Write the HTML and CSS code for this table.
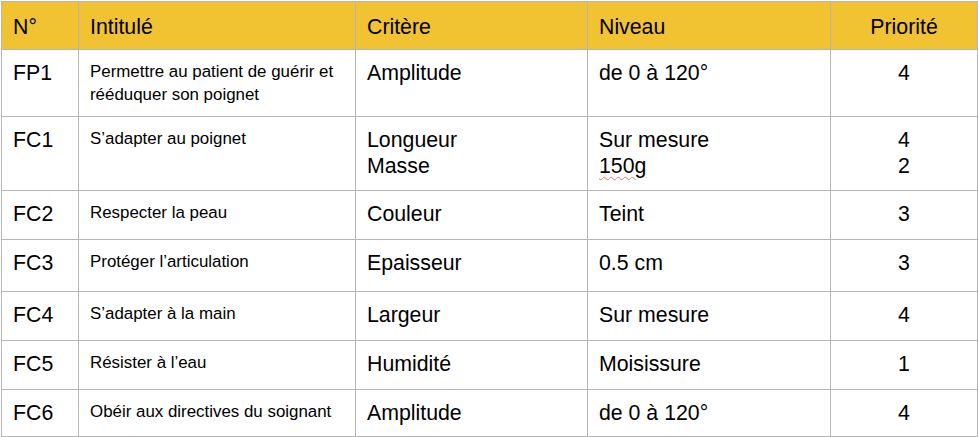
FILE: index.html
```html
<!DOCTYPE html>
<html lang="fr">
<head>
<meta charset="utf-8">
<title>Fonctions</title>
<link rel="stylesheet" href="styles.css">
</head>
<body>
<table class="ft">
  <colgroup>
    <col class="c-num">
    <col class="c-int">
    <col class="c-crit">
    <col class="c-niv">
    <col class="c-prio">
  </colgroup>
  <thead>
    <tr class="r-head">
      <th>N°</th>
      <th>Intitulé</th>
      <th>Critère</th>
      <th>Niveau</th>
      <th class="center">Priorité</th>
    </tr>
  </thead>
  <tbody>
    <tr class="r-fp1">
      <td>FP1</td>
      <td class="small">Permettre au patient de guérir et rééduquer son poignet</td>
      <td>Amplitude</td>
      <td>de 0 à 120°</td>
      <td class="center">4</td>
    </tr>
    <tr class="r-fc1">
      <td>FC1</td>
      <td class="small">S’adapter au poignet</td>
      <td>Longueur<br>Masse</td>
      <td>Sur mesure<br><span class="spell">150g</span></td>
      <td class="center">4<br>2</td>
    </tr>
    <tr class="r-fc2">
      <td>FC2</td>
      <td class="small">Respecter la peau</td>
      <td>Couleur</td>
      <td>Teint</td>
      <td class="center">3</td>
    </tr>
    <tr class="r-fc3">
      <td>FC3</td>
      <td class="small">Protéger l’articulation</td>
      <td>Epaisseur</td>
      <td>0.5 cm</td>
      <td class="center">3</td>
    </tr>
    <tr class="r-fc4">
      <td>FC4</td>
      <td class="small">S’adapter à la main</td>
      <td>Largeur</td>
      <td>Sur mesure</td>
      <td class="center">4</td>
    </tr>
    <tr class="r-fc5">
      <td>FC5</td>
      <td class="small">Résister à l’eau</td>
      <td>Humidité</td>
      <td>Moisissure</td>
      <td class="center">1</td>
    </tr>
    <tr class="r-fc6">
      <td>FC6</td>
      <td class="small">Obéir aux directives du soignant</td>
      <td>Amplitude</td>
      <td>de 0 à 120°</td>
      <td class="center">4</td>
    </tr>
  </tbody>
</table>
</body>
</html>
```

FILE: styles.css
```css
html, body {
  margin: 0;
  padding: 0;
  background: #ffffff;
}

body {
  padding: 1px 0 0 1px;
  font-family: "Liberation Sans", Arial, sans-serif;
  color: #000000;
}

.ft {
  border-collapse: collapse;
  table-layout: fixed;
  width: 976px;
}

.c-num { width: 77px; }
.c-int { width: 277px; }
.c-crit { width: 232px; }
.c-niv { width: 243px; }
.c-prio { width: 147px; }

.ft th,
.ft td {
  border: 1px solid #b5b5b5;
  padding: 10px 11px 0 11px;
  vertical-align: top;
  text-align: left;
  font-weight: normal;
  font-size: 21.3px;
  line-height: 26px;
  box-sizing: border-box;
}

.ft thead th {
  background: #f1c232;
  padding-top: 12px;
}

.ft .center {
  text-align: center;
}

.ft td.small {
  font-size: 16.9px;
  line-height: 23px;
  padding-top: 10px;
}

.spell {
  text-decoration: underline wavy #e57373;
  text-decoration-thickness: 1px;
  text-underline-offset: 3px;
}

.r-head { height: 48px; }
.r-fp1 { height: 67px; }
.r-fc1 { height: 74px; }
.r-fc2 { height: 49px; }
.r-fc3 { height: 52px; }
.r-fc4 { height: 49px; }
.r-fc5 { height: 49px; }
.r-fc6 { height: 47px; }
```
